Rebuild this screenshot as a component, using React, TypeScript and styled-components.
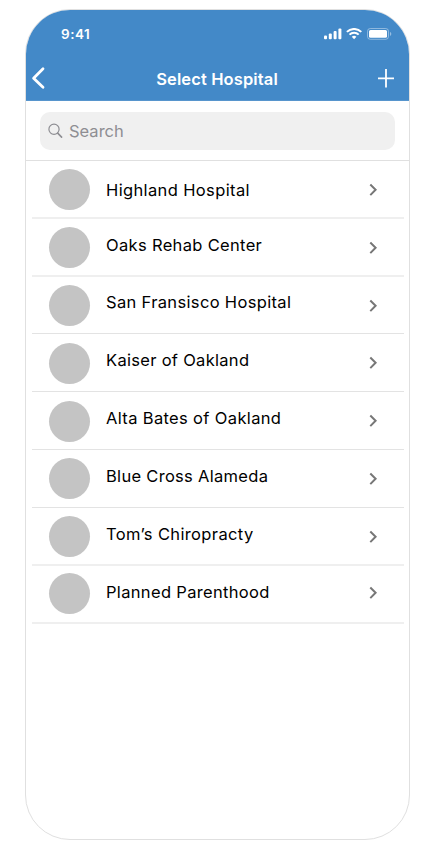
import React from "react";
import styled, { createGlobalStyle } from "styled-components";

const GlobalStyle = createGlobalStyle`
  * { box-sizing: border-box; }
  body { margin: 0; background: #fff; font-family: Inter, "Liberation Sans", sans-serif; }
`;

const Page = styled.main`
  height: 854px;
  padding: 9px 19px 0 25px;
  overflow: hidden;
`;

const Phone = styled.section`
  width: 385px;
  height: 831px;
  border: 1px solid #e0e0e0;
  border-radius: 45px;
  overflow: hidden;
  background: #fff;
`;

const Header = styled.header`
  height: 91px;
  background: #4389c8;
  color: #fff;
  border-bottom: 1px solid #5795cd;
`;

const StatusBar = styled.div`
  height: 46px;
  padding: 2px 17px 0 35px;
  display: flex;
  align-items: center;
  justify-content: space-between;
`;

const Clock = styled.time`
  font-size: 13.5px;
  font-weight: 600;
  letter-spacing: 0.5px;
`;

const NavBar = styled.nav`
  height: 44px;
  padding: 0 14px 0 5px;
  display: grid;
  grid-template-columns: 18px 1fr 18px;
  align-items: center;
`;

const IconButton = styled.button`
  padding: 0;
  border: 0;
  background: none;
  color: inherit;
  display: flex;
`;

const Title = styled.h1`
  margin: 2px 0 0 18px;
  padding-right: 10px;
  font-size: 16.5px;
  font-weight: 600;
  line-height: 22px;
  letter-spacing: 0.12px;
  text-align: center;
`;

const SearchArea = styled.div`
  height: 60px;
  padding: 11px 14px 0;
  border-bottom: 1px solid #e0e0e0;
`;

const SearchField = styled.label`
  height: 37.5px;
  padding-left: 8px;
  display: flex;
  align-items: center;
  gap: 6px;
  border-radius: 10px;
  background: #f0f0f0;
  color: #8e8e93;
  font-size: 16.5px;
`;

const List = styled.ul`
  margin: 0;
  padding: 0 5px 0 6px;
  list-style: none;
`;

const Row = styled.li<{ $height: number; $soft: boolean }>`
  height: ${(p) => p.$height}px;
  padding: 0 26px 0 17px;
  display: grid;
  grid-template-columns: 41px 1fr 9px;
  column-gap: 16px;
  align-items: start;
  border-bottom: ${(p) => (p.$soft ? "2px solid #efefef" : "1px solid #e3e3e3")};
`;

const Avatar = styled.span<{ $top: number }>`
  width: 41px;
  height: 41px;
  margin-top: ${(p) => p.$top}px;
  border-radius: 50%;
  background: #c4c4c4;
`;

const Name = styled.span<{ $top: number; $spacing: number }>`
  margin-top: ${(p) => p.$top}px;
  font-size: 16.5px;
  line-height: 22px;
  letter-spacing: ${(p) => p.$spacing}px;
  color: #000;
  white-space: nowrap;
`;

const Chevron = styled.svg<{ $top: number }>`
  margin-top: ${(p) => p.$top}px;
`;

const hospitals = [
  { name: "Highland Hospital", height: 58, soft: true, avatar: 8, text: 18, chevron: 22, spacing: 0.37 },
  { name: "Oaks Rehab Center", height: 58, soft: true, avatar: 8, text: 15, chevron: 22, spacing: 0.33 },
  { name: "San Fransisco Hospital", height: 57, soft: false, avatar: 8, text: 14, chevron: 22, spacing: 0.34 },
  { name: "Kaiser of Oakland", height: 58, soft: false, avatar: 8.5, text: 15, chevron: 22.4, spacing: 0.3 },
  { name: "Alta Bates of Oakland", height: 58, soft: false, avatar: 8.5, text: 15, chevron: 22, spacing: 0.35 },
  { name: "Blue Cross Alameda", height: 58, soft: false, avatar: 8, text: 15, chevron: 22, spacing: 0.3 },
  { name: "Tom’s Chiropracty", height: 58, soft: true, avatar: 8, text: 15, chevron: 22, spacing: 0.36 },
  { name: "Planned Parenthood", height: 58, soft: true, avatar: 7, text: 15, chevron: 20, spacing: 0.33 },
];

export default function App() {
  return (
    <>
      <GlobalStyle />
      <Page>
        <Phone>
          <Header>
            <StatusBar>
              <Clock>9:41</Clock>
              <svg width="68" height="13" viewBox="0 0 68 13" fill="#fff">
                <rect x="0" y="7.5" width="3" height="3.7" rx="1" />
                <rect x="4.8" y="5.4" width="3" height="5.8" rx="1" />
                <rect x="9.6" y="3" width="3" height="8.2" rx="1" />
                <rect x="14.4" y="0.6" width="3" height="10.6" rx="1" />
                <g fill="none" stroke="#fff" strokeWidth="2">
                  <path d="M22.9 3.9a10.3 10.3 0 0 1 14.4 0" />
                  <path d="M25.5 6.6a6.5 6.5 0 0 1 9.2 0" />
                </g>
                <path d="M27.8 8.8a3.5 3.5 0 0 1 4.6 0l-2.3 2.4z" />
                <rect x="43.5" y="0.5" width="21" height="10.8" rx="2.8" fill="none" stroke="#fff" strokeOpacity=".4" />
                <rect x="45" y="2" width="18" height="7.8" rx="1.5" />
                <path d="M66 4.1v3.8c.8-.3 1.3-1.1 1.3-1.9S66.8 4.4 66 4.1z" opacity=".45" />
              </svg>
            </StatusBar>
            <NavBar>
              <IconButton aria-label="Back">
                <svg width="18" height="24" viewBox="0 0 18 24" fill="none" stroke="#fff" strokeWidth="2.8" strokeLinecap="round" strokeLinejoin="round">
                  <path d="M12 2.8L2.6 12.2l9.4 9.1" />
                </svg>
              </IconButton>
              <Title>Select Hospital</Title>
              <IconButton aria-label="Add hospital">
                <svg width="18" height="20" viewBox="0 0 18 20" stroke="#fff" strokeWidth="1.8">
                  <path d="M9 1v18.5M1 10.3h16" />
                </svg>
              </IconButton>
            </NavBar>
          </Header>
          <SearchArea>
            <SearchField>
              <svg width="15" height="16" viewBox="0 0 15 16" fill="none" stroke="#8e8e93" strokeWidth="1.2" strokeLinecap="round">
                <circle cx="6" cy="6.3" r="5.1" />
                <path d="M9.7 10.1l3.9 4" strokeWidth="1.6" />
              </svg>
              Search
            </SearchField>
          </SearchArea>
          <List>
            {hospitals.map((h) => (
              <Row key={h.name} $height={h.height} $soft={h.soft}>
                <Avatar $top={h.avatar} />
                <Name $top={h.text} $spacing={h.spacing}>{h.name}</Name>
                <Chevron $top={h.chevron} width="9" height="14" viewBox="0 0 9 14" fill="none" stroke="#777" strokeWidth="2">
                  <path d="M1.3 1.5l5.3 5.3-5.3 5.3" />
                </Chevron>
              </Row>
            ))}
          </List>
        </Phone>
      </Page>
    </>
  );
}
